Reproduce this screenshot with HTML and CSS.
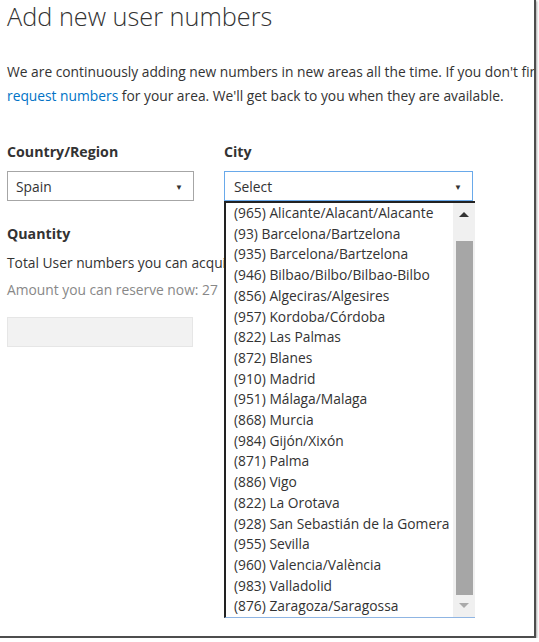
FILE: index.html
```html
<!DOCTYPE html>
<html>
<head>
<meta charset="utf-8">
<link rel="stylesheet" href="styles.css">
</head>
<body>
<div class="frame">
  <div class="page">
    <h1 class="title">Add new user numbers</h1>
    <p class="intro">We are continuously adding new numbers in new areas all the time. If you don't find what you need,<br><a class="link" href="#">request numbers</a> for your area. We'll get back to you when they are available.</p>
    <div class="fields">
      <div class="field field-country">
        <div class="label">Country/Region</div>
        <div class="select">
          <span>Spain</span>
          <span class="caret">&#9660;</span>
        </div>
      </div>
      <div class="field field-city">
        <div class="label">City</div>
        <div class="select select-focus">
          <span>Select</span>
          <span class="caret">&#9660;</span>
        </div>
        <div class="dropdown">
          <ul class="options">
            <li>(965) Alicante/Alacant/Alacante</li>
            <li>(93) Barcelona/Bartzelona</li>
            <li>(935) Barcelona/Bartzelona</li>
            <li>(946) Bilbao/Bilbo/Bilbao-Bilbo</li>
            <li>(856) Algeciras/Algesires</li>
            <li>(957) Kordoba/Córdoba</li>
            <li>(822) Las Palmas</li>
            <li>(872) Blanes</li>
            <li>(910) Madrid</li>
            <li>(951) Málaga/Malaga</li>
            <li>(868) Murcia</li>
            <li>(984) Gijón/Xixón</li>
            <li>(871) Palma</li>
            <li>(886) Vigo</li>
            <li>(822) La Orotava</li>
            <li>(928) San Sebastián de la Gomera</li>
            <li>(955) Sevilla</li>
            <li>(960) Valencia/València</li>
            <li>(983) Valladolid</li>
            <li>(876) Zaragoza/Saragossa</li>
          </ul>
          <div class="scrollbar">
            <div class="arrow arrow-up"></div>
            <div class="thumb"></div>
            <div class="arrow arrow-down"></div>
          </div>
        </div>
      </div>
    </div>
    <div class="quantity">
      <div class="label">Quantity</div>
      <p class="total">Total User numbers you can acquire: 27</p>
      <p class="amount">Amount you can reserve now: 27</p>
      <div class="input"></div>
    </div>
  </div>
</div>
</body>
</html>
```
FILE: styles.css
```css
html, body {
  margin: 0;
  padding: 0;
  background: #ffffff;
}
body {
  font-family: "Open Sans", "Noto Sans", sans-serif;
  color: #333333;
}
.frame {
  width: 534px;
  height: 636px;
  border-right: 2px solid #4d4d4d;
  border-bottom: 2px solid #4d4d4d;
  box-shadow: 1px 1px 2px rgba(0,0,0,0.35);
  overflow: hidden;
  position: relative;
  background: #fff;
}
.page {
  padding: 0 0 0 7px;
}
.title {
  margin: 0;
  font-weight: 300;
  font-size: 25.3px;
  line-height: 32px;
  color: #333;
  white-space: nowrap;
}
.intro {
  margin: 28px 0 0 0;
  font-size: 13.8px;
  line-height: 24px;
  white-space: nowrap;
}
.link {
  color: #0072c6;
  text-decoration: none;
}
.fields {
  display: flex;
  margin-top: 34px;
  gap: 30px;
}
.field-country {
  width: 187px;
}
.field-city {
  width: 249px;
  position: relative;
}
.label {
  font-weight: 700;
  font-size: 14.2px;
  line-height: 20px;
  white-space: nowrap;
}
.select {
  margin-top: 9px;
  height: 30px;
  box-sizing: border-box;
  border: 1px solid #a6a6a6;
  display: flex;
  align-items: center;
  justify-content: space-between;
  padding: 0 10px 0 8px;
  font-size: 13.8px;
}
.select-focus {
  border-color: #69a9ea;
  padding-left: 9px;
}
.caret {
  font-size: 8px;
  color: #333;
}
.dropdown {
  position: absolute;
  left: 0;
  top: 59px;
  width: 251px;
  height: 417px;
  box-sizing: border-box;
  border-left: 2px solid #222;
  border-top: 2px solid #222;
  border-bottom: 1px solid #8fb5e3;
  background: #fff;
  display: flex;
  z-index: 5;
}
.options {
  list-style: none;
  margin: 0;
  padding: 0 0 0 8px;
  flex: 1;
  font-size: 13.8px;
  line-height: 20.7px;
  white-space: nowrap;
  overflow: hidden;
}
.scrollbar {
  width: 22px;
  background: #f0f0f0;
  display: flex;
  flex-direction: column;
  align-items: center;
}
.arrow {
  width: 0;
  height: 0;
  border-left: 5px solid transparent;
  border-right: 5px solid transparent;
}
.arrow-up {
  margin-top: 9px;
  border-bottom: 5px solid #333;
}
.arrow-down {
  margin-top: 8px;
  border-top: 5px solid #aaa;
}
.thumb {
  margin-top: 24px;
  width: 17px;
  height: 354px;
  background: #a6a6a6;
}
.quantity {
  margin-top: 23px;
}
.total {
  margin: 9px 0 0 0;
  font-size: 13.8px;
  line-height: 20px;
  white-space: nowrap;
}
.amount {
  margin: 7px 0 0 0;
  font-size: 13.8px;
  line-height: 20px;
  color: #888;
  white-space: nowrap;
}
.input {
  margin-top: 17px;
  width: 186px;
  height: 30px;
  box-sizing: border-box;
  background: #f2f2f2;
  border: 1px solid #e6e6e6;
}
```
